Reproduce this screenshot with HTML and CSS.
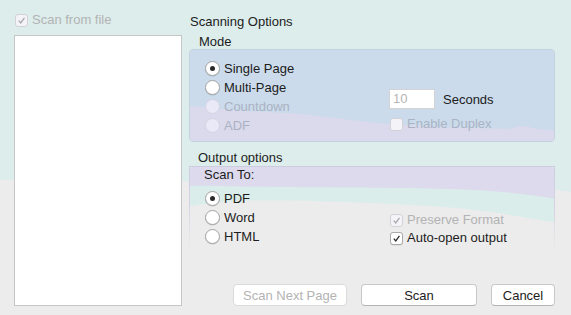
FILE: index.html
```html
<!DOCTYPE html>
<html lang="en">
<head>
    <meta charset="UTF-8">
    <meta name="viewport" content="width=device-width, initial-scale=1.0">
    <link rel="stylesheet" href="styles.css">
</head>
<body>
    <!-- blurred wallpaper behind the window -->
    <svg class="backdrop" viewBox="0 0 571 315" preserveAspectRatio="none">
        <path d="M0 0 H571 V192 C540 186 470 182 400 181 C300 180 200 182 120 181 C60 180 20 180 0 180 Z" fill="#dcedeb"/>
    </svg>

    <div class="window">
        <!-- left: file list -->
        <aside class="file-side">
            <label class="check-row disabled">
                <span class="check on">
                    <svg viewBox="0 0 12 12"><path d="M3 6.2 L5.2 8.6 L9.2 3.2"/></svg>
                </span>
                Scan from file
            </label>
            <div class="file-list"></div>
        </aside>

        <!-- right: options -->
        <main class="options-side">
            <div class="heading">Scanning Options</div>

            <div class="group-title">Mode</div>
            <div class="group mode-box">
                <svg class="group-bg" viewBox="0 0 366 93" preserveAspectRatio="none">
                    <rect width="366" height="93" fill="#cbdbeb"/>
                    <path d="M0 57 C20 59 40 62 70 63 C100 64 120 66 150 70 C180 74 200 76 240 78 C270 80 300 80 320 81 C330 77 338 77 345 80 C352 82 360 81 366 82 V93 H0 Z" fill="#dbd9ec"/>
                </svg>
                <div class="radio-list">
                    <label class="radio-row"><span class="radio on"></span>Single Page</label>
                    <label class="radio-row"><span class="radio"></span>Multi-Page</label>
                    <label class="radio-row disabled"><span class="radio"></span>Countdown</label>
                    <label class="radio-row disabled"><span class="radio"></span>ADF</label>
                </div>
                <div class="side-list">
                    <div class="seconds-row">
                        <span class="num-field">10</span>
                        <span>Seconds</span>
                    </div>
                    <label class="check-row disabled">
                        <span class="check"></span>
                        Enable Duplex
                    </label>
                </div>
            </div>

            <div class="group-title output-title">Output options</div>
            <div class="group output-box">
                <svg class="group-bg" viewBox="0 0 366 84" preserveAspectRatio="none">
                    <rect width="366" height="84" fill="#ececec"/>
                    <path d="M0 0 H366 V56 C330 50 300 44 250 40 C200 37 120 33 60 34 C30 35 10 38 0 40 Z" fill="#dbedeb"/>
                    <path d="M0 0 H366 V32 C330 26 300 23 250 22 C200 21 120 21 60 20 C30 19 10 19 0 19 Z" fill="#dcdaec"/>
                </svg>
                <div class="scan-to">Scan To:</div>
                <div class="output-body">
                    <div class="radio-list">
                        <label class="radio-row"><span class="radio on"></span>PDF</label>
                        <label class="radio-row"><span class="radio"></span>Word</label>
                        <label class="radio-row"><span class="radio"></span>HTML</label>
                    </div>
                    <div class="side-list">
                        <label class="check-row disabled">
                            <span class="check on">
                                <svg viewBox="0 0 12 12"><path d="M3 6.2 L5.2 8.6 L9.2 3.2"/></svg>
                            </span>
                            Preserve Format
                        </label>
                        <label class="check-row">
                            <span class="check on">
                                <svg viewBox="0 0 12 12"><path d="M3 6.2 L5.2 8.6 L9.2 3.2"/></svg>
                            </span>
                            Auto-open output
                        </label>
                    </div>
                </div>
            </div>

            <div class="buttons">
                <button class="btn next-btn" disabled>Scan Next Page</button>
                <button class="btn scan-btn">Scan</button>
                <button class="btn cancel-btn">Cancel</button>
            </div>
        </main>
    </div>
</body>
</html>
```

FILE: styles.css
```css
/* common */
body {
    margin: 0;
    width: 571px;
    height: 315px;
    overflow: hidden;
    position: relative;
    background-color: #ececec;
    font-family: "Liberation Sans", Arial, sans-serif;
    font-size: 13px;
    color: #1c1c1c;
}

.backdrop {
    position: absolute;
    top: 0;
    left: 0;
    width: 571px;
    height: 315px;
}

.window {
    position: relative;
    display: flex;
    gap: 7px;
    padding: 0 16px 0 14px;
}

/* left side */
.file-side {
    width: 168px;
    display: flex;
    flex-direction: column;
}

.file-side .check-row {
    margin-top: 12px;
    padding-left: 1px;
    height: 16px;
}

.file-list {
    margin-top: 7px;
    height: 269px;
    background-color: #fff;
    border: 1px solid #c6c6c6;
}

/* checkboxes */
.check-row {
    display: flex;
    align-items: center;
    gap: 4px;
    line-height: 16px;
}

.check {
    width: 11px;
    height: 11px;
    border: 1px solid #a9a9a9;
    border-radius: 3px;
    background-color: #fff;
    display: flex;
    box-shadow: 0 0.5px 0.5px rgba(0, 0, 0, 0.12);
}

.check svg {
    width: 11px;
    height: 11px;
}

.check svg path {
    fill: none;
    stroke: #2a2a2a;
    stroke-width: 1.4;
}

.disabled {
    color: #b3b3b3;
}

.disabled .check {
    border-color: #d2d2d8;
    background-color: #f3f3f8;
    box-shadow: none;
}

.disabled .check svg path {
    stroke: #a9a9a9;
}

/* right side */
.options-side {
    width: 366px;
    display: flex;
    flex-direction: column;
}

.heading {
    margin-top: 14px;
    padding-left: 1px;
    line-height: 16px;
}

.group-title {
    margin-top: 4px;
    padding-left: 10px;
    line-height: 15px;
}

.output-title {
    margin-top: 8px;
    padding-left: 9px;
    line-height: 16px;
}

.group {
    position: relative;
    overflow: hidden;
    border-radius: 4px;
}

.group-bg {
    position: absolute;
    top: 0;
    left: 0;
    width: 100%;
    height: 100%;
}

.mode-box {
    height: 91px;
    border: 1px solid #c3d2e1;
    display: flex;
}

.radio-list {
    position: relative;
    display: flex;
    flex-direction: column;
    padding-left: 15px;
    width: 184px;
}

.mode-box .radio-list {
    padding-top: 9px;
}

.radio-row {
    display: flex;
    align-items: center;
    gap: 4px;
    height: 19px;
}

.radio {
    width: 13px;
    height: 13px;
    border: 1px solid #a4a4a4;
    border-radius: 50%;
    background-color: #fff;
    box-shadow: 0 0.5px 0.5px rgba(0, 0, 0, 0.15);
    display: flex;
    align-items: center;
    justify-content: center;
}

.radio.on::after {
    content: "";
    width: 5px;
    height: 5px;
    border-radius: 50%;
    background-color: #2b2b2b;
}

.radio-row.disabled {
    color: #aab2c2;
}

.disabled .radio {
    border-color: #d3d3e3;
    background-color: #eae9f7;
    box-shadow: none;
}

.side-list {
    position: relative;
    display: flex;
    flex-direction: column;
    justify-content: flex-end;
}

.mode-box .side-list {
    padding-bottom: 8px;
}

.seconds-row {
    display: flex;
    align-items: center;
    gap: 8px;
    height: 20px;
    margin-bottom: 6px;
}

.num-field {
    width: 41px;
    height: 18px;
    line-height: 18px;
    padding-left: 3px;
    background-color: #fff;
    border: 1px solid #d3d3d3;
    color: #b5b5b5;
}

.side-list .check-row {
    padding-left: 1px;
    height: 18px;
}

.mode-box .side-list .check-row.disabled {
    color: #aab3c4;
}

/* output options */
.output-box {
    height: 83px;
    border: 1px solid #cfcde3;
    border-bottom: none;
    border-image: linear-gradient(to bottom, #cdcbe0, #d6d4e4 50%, rgba(236, 236, 236, 0)) 1;
}

.scan-to {
    position: relative;
    padding-left: 14px;
    line-height: 16px;
}

.output-body {
    position: relative;
    display: flex;
    margin-top: 6px;
}

.output-body .side-list {
    padding-top: 22px;
}

/* buttons */
.buttons {
    display: flex;
    justify-content: flex-end;
    gap: 14px;
    margin-top: 34px;
}

.btn {
    height: 22px;
    font-family: "Liberation Sans", Arial, sans-serif;
    font-size: 13px;
    color: #1c1c1c;
    background-color: #fff;
    border: 1px solid #c8c8c8;
    border-bottom-color: #b4b4b4;
    border-radius: 4px;
    padding: 0;
}

.next-btn {
    width: 114px;
    color: #b3b3b3;
    border-color: #dadada;
}

.scan-btn {
    width: 116px;
}

.cancel-btn {
    width: 64px;
}
```
